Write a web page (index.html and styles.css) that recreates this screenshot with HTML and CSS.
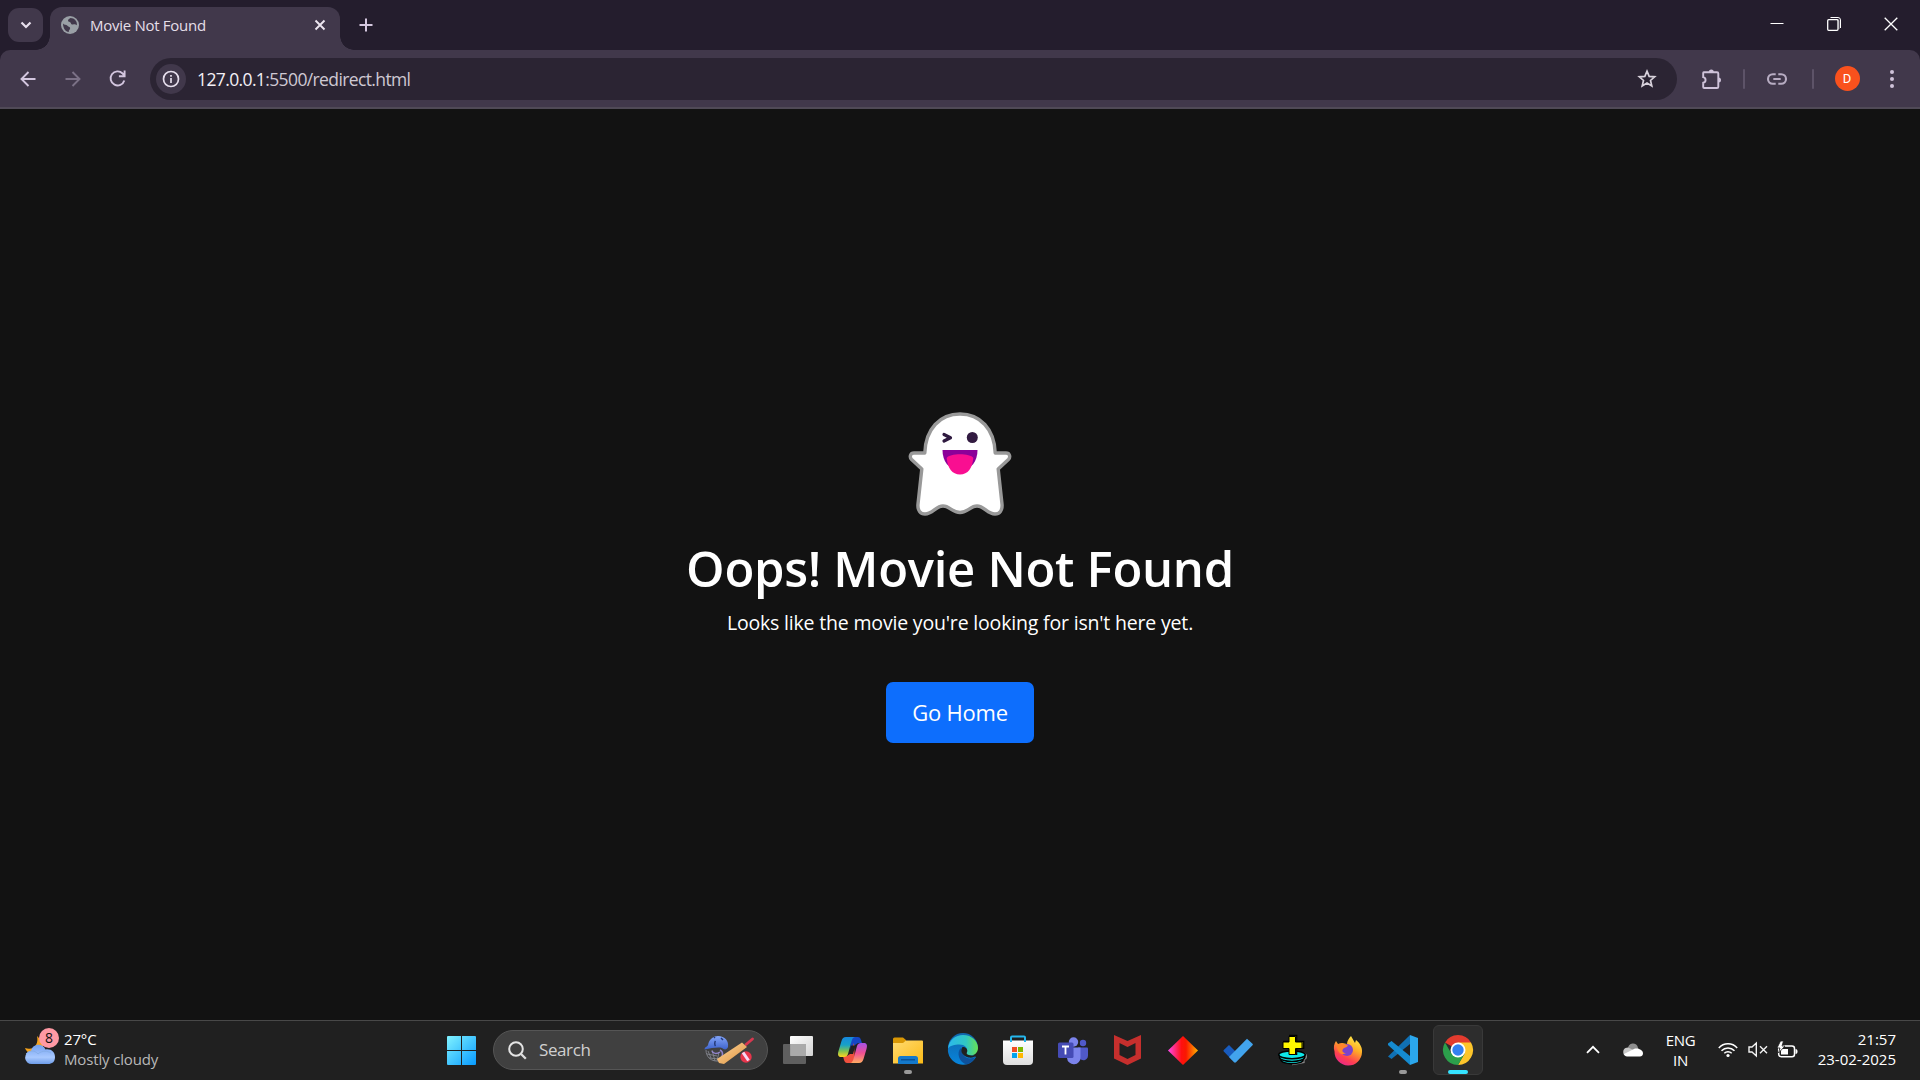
FILE: index.html
```html
<!DOCTYPE html>
<html lang="en">
<head>
<meta charset="utf-8">
<title>Movie Not Found</title>
<link rel="stylesheet" href="styles.css">
</head>
<body>
<div class="screen">
  <header class="tabstrip">
    <button class="tab-search" aria-label="Search tabs"><svg width="12" height="8" viewBox="0 0 12 8"><path d="M1.5 1.5L6 6l4.500-4.500" fill="none" stroke="#e8e0ee" stroke-width="2.200"/></svg></button>
    <div class="tab">
      <svg width="18" height="18" viewBox="0 0 18 18"><circle cx="9" cy="9" r="9" fill="#9aa0a6"/><path d="M2 7.500c1.500 1.800 3 1 4.500 2.200 1 1.500 3 .8 2.600 2.800-.2 1.500-1.600 1.500-1.300 3.600C4.500 15.500 2 12.500 2 7.500zM9.500 2c-.8 1-2.500 1-2.500 2.700 0 1.300 2.400.8 2.800 2.300.3 1.400 1.600 1.800 2.900 1.300 1-.4 2 0 3.200 1C16.500 5.500 13.500 2 9.500 2z" fill="#41384b"/></svg>
      <span class="tab-title">Movie Not Found</span>
      <svg width="12" height="12" viewBox="0 0 12 12"><path d="M1.500 1.500l9 9m0-9l-9 9" stroke="#ece6f0" stroke-width="1.900"/></svg>
    </div>
    <button class="new-tab" aria-label="New tab"><svg width="14" height="14" viewBox="0 0 14 14"><path d="M7 .5v13M.5 7h13" stroke="#d5c8e0" stroke-width="2"/></svg></button>
    <div class="window-controls">
      <span><svg width="14" height="14" viewBox="0 0 14 14"><path d="M.5 6.500h13" stroke="#fff"/></svg></span>
      <span><svg width="14" height="14" viewBox="0 0 14 14" fill="none"><path d="M3.500.500h7.500a2.500 2.500 0 0 1 2.500 2.500v8" stroke="#fff" stroke-width="1"/><path d="M2 2.500h8.500a1.500 1.500 0 0 1 1.500 1.500v8" stroke="#8d8793"/><rect x=".7" y="2.700" width="10.300" height="10.600" rx="1" stroke="#fff" stroke-width="1.300"/></svg></span>
      <span><svg width="14" height="14" viewBox="0 0 14 14"><path d="M.7.700l12.600 12.600M13.300.700L.7 13.300" stroke="#fff" stroke-width="1.300"/></svg></span>
    </div>
  </header>

  <nav class="toolbar">
    <span class="slot back"><svg width="16" height="16" viewBox="0 0 16 16"><path d="M15.500 8H2M8.500 1L1.500 8l7 7" fill="none" stroke="#d3c6df" stroke-width="1.900"/></svg></span>
    <span class="slot"><svg width="16" height="16" viewBox="0 0 16 16"><path d="M.5 8H14M7.500 1l7 7-7 7" fill="none" stroke="#7b7186" stroke-width="1.900"/></svg></span>
    <span class="slot"><svg width="17" height="17" viewBox="0 0 17 17"><path d="M15.300 10.400A7 7 0 1 1 13.600 3.500L15.300 5.400M15.600.6v5.700H9.900" fill="none" stroke="#d3c6df" stroke-width="1.900"/></svg></span>
    <div class="omnibox">
      <span class="site-info"><svg width="18" height="18" viewBox="0 0 18 18"><circle cx="9" cy="9" r="7.500" fill="none" stroke="#e6deec" stroke-width="1.700"/><path d="M9 8v5M9 5v1.800" stroke="#e6deec" stroke-width="1.700"/></svg></span>
      <span class="url"><b>127.0.0.1</b>:5500/redirect.html</span>
      <svg class="star" width="20" height="20" viewBox="0 0 20 20"><path d="M10 2.200l2.150 5.150 5.550.45-4.200 3.650 1.300 5.450L10 14l-4.800 2.900 1.300-5.450L2.300 7.800l5.550-.45z" fill="none" stroke="#d8d2dc" stroke-width="1.700"/></svg>
    </div>
    <span class="slot ext"><svg width="22" height="22" viewBox="0 0 22 22"><path d="M2.800 4.200H16a1.300 1.300 0 0 1 1.300 1.300v13.200a1.300 1.300 0 0 1-1.300 1.300H3.200a1 1 0 0 1-1-1v-4.200a2.900 2.900 0 0 0 0-5.700V4.900a.7.700 0 0 1 .6-.7z" fill="none" stroke="#cfc3da" stroke-width="1.900"/><path d="M7.800 4a2.500 2.500 0 0 1 5 0zM17.500 9.500a2.500 2.500 0 0 1 0 5z" fill="#cfc3da"/></svg></span>
    <i class="divider"></i>
    <span class="slot"><svg width="20" height="12" viewBox="0 0 20 12"><path d="M8.700 1.200H5.800a4.800 4.800 0 0 0 0 9.600h2.900M11.300 1.200h2.900a4.800 4.800 0 0 1 0 9.600h-2.900M6.300 6h7.400" fill="none" stroke="#b8adc3" stroke-width="2.100"/></svg></span>
    <i class="divider"></i>
    <span class="avatar">D</span>
    <span class="slot"><svg width="4" height="18" viewBox="0 0 4 18" fill="#cfc3da"><circle cx="2" cy="2" r="2"/><circle cx="2" cy="9" r="2"/><circle cx="2" cy="16" r="2"/></svg></span>
  </nav>

  <main class="page">
    <svg class="ghost" width="104" height="104" viewBox="0 0 104 104">
      <path d="M52 2C32 2 17.500 17 16.800 41H6C2.300 41 1.200 45 3.600 47.500L13.800 57 10 92C9.300 98.500 12.500 102 17 102c8 0 10.500-8 18-8 7 0 9 6.500 17 6.500s10-6.500 17-6.500C76.500 94 79 102 87 102c4.500 0 7.700-3.500 7-10L90.200 57l10.200-9.500C102.800 45 101.700 41 98 41H87.200C86.500 17 72 2 52 2z" fill="#fff" stroke="#999" stroke-width="3.400" stroke-linejoin="round"/>
      <path d="M36 22.500l6.500 3.200-6.500 3.300" fill="none" stroke="#2f1a40" stroke-width="3.200" stroke-linecap="round" stroke-linejoin="round"/>
      <circle cx="64.300" cy="25.500" r="5.500" fill="#321b41"/>
      <path d="M34.500 38h35c0 11-6 20-17.500 20s-17.500-9-17.500-20z" fill="#8c0099"/>
      <path d="M38.700 46c3-5 23.600-5 26.600 0C64.500 56 60 62.500 52 62.500S39.500 56 38.700 46z" fill="#f90e91"/>
    </svg>
    <h1>Oops! Movie Not Found</h1>
    <p>Looks like the movie you're looking for isn't here yet.</p>
    <a class="home">Go Home</a>
  </main>

  <footer class="taskbar">
    <div class="weather">
      <div class="weather-icon">
        <svg width="32" height="32" viewBox="0 0 32 32"><defs><linearGradient id="cl" x2="0" y2="1"><stop stop-color="#72a0ef"/><stop offset=".65" stop-color="#a9c9ff"/><stop offset="1" stop-color="#6d9ce8"/></linearGradient></defs><path d="M13 2c2 8-3 15-12 12 2 6 11 9 16 5l3-10z" fill="#f5a31d"/><path d="M8 30a6.500 6.500 0 0 1-.8-13C8 9.500 19 8.500 21.500 15.500 27 14.500 31 18 31 23s-3 7-7 7z" fill="url(#cl)"/><path d="M2 20c3-4 9-4 12 0 4-4 10-3 13-1" fill="none" stroke="#87afea"/></svg>
        <span class="badge">8</span>
      </div>
      <div class="weather-text"><span>27°C</span><span class="muted">Mostly cloudy</span></div>
    </div>

    <div class="apps">
      <span class="app start"><svg width="29" height="29" viewBox="0 0 29 29"><defs><linearGradient id="wn" x2="1" y2="1"><stop stop-color="#81f3ff"/><stop offset="1" stop-color="#079aff"/></linearGradient></defs><path d="M1 0h13v14H0V1a1 1 0 0 1 1-1zM15 0h13a1 1 0 0 1 1 1v13H15zM0 15h14v14H1a1 1 0 0 1-1-1zM15 15h14v13a1 1 0 0 1-1 1H15z" fill="url(#wn)"/></svg></span>
      <div class="search">
        <svg width="19" height="19" viewBox="0 0 19 19"><circle cx="8" cy="8" r="6.800" fill="none" stroke="#e4e4e4" stroke-width="2"/><path d="M12.800 12.800l5 5" stroke="#ddd" stroke-width="2.300"/></svg>
        <span class="search-label">Search</span>
        <svg width="50" height="30" viewBox="0 0 50 30"><defs><linearGradient id="bt" x2="1" y2="1"><stop stop-color="#ffd69b"/><stop offset="1" stop-color="#dd923e"/></linearGradient><linearGradient id="hm" x2="0" y2="1"><stop stop-color="#82a4f8"/><stop offset="1" stop-color="#3e63cb"/></linearGradient></defs><path d="M2 15c0 7 5 12 14 11M3 19l10 2M5 23l10 1M8 15l3 11M4 16l3 7M15 17l-2 9" stroke="#83868e" stroke-width=".9" fill="none"/><path d="M.5 14.500C.5 12 3 12 4 10 5 4 10 1 14 1c7 0 11 5 10 11-1 3-4 3-6 1-4-1-10 0-17.500 1.500z" fill="url(#hm)"/><path d="M11.500 6c-1 1-1 4 0 5M17 3l2 2M11 2l-1 1" stroke="#243978" stroke-width="1.500" fill="none"/><path d="M16 15c4 2 3 7-1 11M8 16c1 3 5 3 8 1" stroke="#9184cc" stroke-width="1.500" fill="none"/><path d="M42 9.500L48.500 4" stroke="#d83850" stroke-width="2.800" stroke-linecap="round"/><path d="M38 7.500l5 4.500L20 29l-5-1-2-4z" fill="url(#bt)"/><circle cx="42" cy="22" r="5.700" fill="#e7354b"/><path d="M39 17.500l5.500 8" stroke="#f6d9f5" stroke-width="3"/></svg>
      </div>
      <span class="app"><svg width="30" height="28" viewBox="0 0 30 28"><defs><linearGradient id="tv" x2="1" y2="1"><stop stop-color="#fff"/><stop offset="1" stop-color="#d3d3d3"/></linearGradient></defs><rect x="7" y="0" width="23" height="20" rx="1" fill="url(#tv)"/><rect y="8" width="23" height="20" rx="1" fill="#777" fill-opacity=".72"/><path d="M7.500 8H22a1 1 0 0 1 1 1v11H7.500z" fill="#aaa"/></svg></span>
      <span class="app"><svg width="29" height="26" viewBox="0 0 29 26"><defs><linearGradient id="c1" x2="0" y2="1"><stop stop-color="#1687de"/><stop offset=".4" stop-color="#17a1c7"/><stop offset=".7" stop-color="#7cc253"/><stop offset="1" stop-color="#ffd51f"/></linearGradient><linearGradient id="c2" x2="0" y2="1"><stop stop-color="#a552e7"/><stop offset=".5" stop-color="#ef4f93"/><stop offset="1" stop-color="#ffac62"/></linearGradient></defs><path d="M12 0h8c2.500 0 3 3 4 6h-4l-3 2-4 11z" fill="#1546c5"/><path d="M17 26H9c-2.500 0-3-3-4-7h4l3-2 4-11z" fill="#f0503e"/><path d="M8 0h9c-2 0-3 2-4 6l-3 11c-.6 2-2 3-4 3H3c-3 0-3.500-2.500-2.500-6L3.500 4C4.300 1.500 5.500 0 8 0z" fill="url(#c1)"/><path d="M21 26h-9c2 0 3-2 4-6l3-11c.6-2 2-3 4-3h3c3 0 3.500 2.500 2.500 6l-3 10c-.8 2.500-2 4-4.500 4z" fill="url(#c2)"/><path d="M13.300 8.500h4.200l-2.500 8.500h-4.200z" fill="#202020"/></svg></span>
      <span class="app running"><svg width="30" height="27" viewBox="0 0 30 27"><defs><linearGradient id="fo" x2="1" y2="1"><stop stop-color="#ffda70"/><stop offset="1" stop-color="#fcbb16"/></linearGradient></defs><path d="M0 2a1.500 1.500 0 0 1 1.500-1.500H10L13 3v5H0z" fill="#d99704"/><path d="M0 6h10l3-2.500h16a1 1 0 0 1 1 1V26.500H0z" fill="url(#fo)"/><path d="M5 27v-5.500A2.500 2.500 0 0 1 7.500 19h15a2.500 2.500 0 0 1 2.500 2.500V27z" fill="#1479cb"/><path d="M8 22.800h14" stroke="#064a8c" stroke-width="1.200"/></svg></span>
      <span class="app"><svg width="30" height="30" viewBox="0 0 30 30"><defs><linearGradient id="e1" x2="1"><stop stop-color="#2bb7ec"/><stop offset=".6" stop-color="#31c7c3"/><stop offset="1" stop-color="#68e252"/></linearGradient><linearGradient id="e2" x2="0" y2="1"><stop stop-color="#1165ab"/><stop offset="1" stop-color="#0785dc"/></linearGradient></defs><path d="M0 13a15 15 0 0 0 28 9l-6-4 8-5A15 15 0 0 0 0 13z" fill="url(#e2)"/><path d="M0 13.500C1 5 7.500 0 15 0c9 0 15 6.500 15 13 0 5-4 7.500-7.500 7.500-4 0-5.500-1.500-4-3.500 2-4-2-7.500-7-7.500-5 0-9.500 1-11.500 4z" fill="url(#e1)"/><path d="M13 13c-5 4-2 15 6 16.500 3-1 6.500-3.500 8.500-7.500-7 3.500-13.500.5-14.500-9z" fill="#0e519b"/><path d="M14.500 12c-3 4 0 9 6 10.500 4 .5 6-.5 7.500-1.500l2-3c-3 3-7 3-10 1.800-2-1-1.200-2.300-.7-3.600.3-2-1.500-4.200-4.800-4.200z" fill="#202020"/></svg></span>
      <span class="app"><svg width="30" height="30" viewBox="0 0 30 30"><defs><linearGradient id="st" x2="0" y2="1"><stop stop-color="#fff"/><stop offset="1" stop-color="#dedede"/></linearGradient></defs><path d="M0 5.500h30V26a4 4 0 0 1-4 4H4a4 4 0 0 1-4-4z" fill="url(#st)"/><path d="M8 7V2.500A1 1 0 0 1 9 1.500h12a1 1 0 0 1 1 1V7" fill="none" stroke="#25b7ed" stroke-width="2"/><path d="M9 12h5v5H9z" fill="#f04e23"/><path d="M15 12h5v5h-5z" fill="#7eb900"/><path d="M9 18h5v5H9z" fill="#00a3ee"/><path d="M15 18h5v5h-5z" fill="#ffb700"/></svg></span>
      <span class="app"><svg width="30" height="27" viewBox="0 0 30 27"><circle cx="15.500" cy="5" r="4.700" fill="#7b83eb"/><circle cx="25" cy="6" r="3.200" fill="#5059c9"/><path d="M20 10.500h9a1 1 0 0 1 1 1V18c0 6-6 6-8 4z" fill="#5059c9"/><path d="M9 10.500h13.500V20a6.500 6.500 0 0 1-13.500 1z" fill="#7b83eb"/><rect y="5.500" width="15.500" height="15.500" rx="1.500" fill="#454bb5"/><path d="M4 9.500h7M7.500 9.500V17.500" stroke="#fff" stroke-width="1.800"/></svg></span>
      <span class="app"><svg width="27" height="30" viewBox="0 0 27 30"><path d="M0 0l13.500 6L27 0v23.500L13.500 30 0 23.500zM5.500 8v12l8 4 8-4V8l-8 4z" fill="#c62f2d"/></svg></span>
      <span class="app"><svg width="30" height="29" viewBox="0 0 30 29"><defs><linearGradient id="di" x2="1"><stop stop-color="#ff49ee"/><stop offset=".45" stop-color="#ff1010"/><stop offset=".6" stop-color="#fa1800"/><stop offset="1" stop-color="#ffb400"/></linearGradient></defs><path d="M15 0l15 14.500L15 29 0 14.500z" fill="url(#di)"/></svg></span>
      <span class="app"><svg width="30" height="25" viewBox="0 0 30 25"><path d="M6 7l8 8-5 7L.8 13.500a1 1 0 0 1 0-1.500z" fill="#185bbd"/><path d="M24 .7l5.500 5a1 1 0 0 1 0 1.500L13 24.300a1.500 1.500 0 0 1-2 0L6 19z" fill="#42a4ed"/></svg></span>
      <span class="app"><svg width="30" height="30" viewBox="0 0 30 30"><path d="M24 17.500c6 1.500 5 6 2 7v3l-12 2" fill="none" stroke="#888" stroke-width="1.300"/><g fill="#0ee7e9" stroke="#000" stroke-width="1.500"><ellipse cx="14" cy="25" rx="11" ry="3.700"/><ellipse cx="14" cy="22.500" rx="12.500" ry="3.900"/><ellipse cx="14" cy="19.800" rx="13.300" ry="3.900"/></g><path d="M11 1h7v6h7v7h-7v6h-7v-6H5V7h6z" transform="translate(.7 -.7)" fill="#8c8600" stroke="#000" stroke-width="1.200"/><path d="M11 1.500h6.500V7H24v6.500h-6.500v6H11v-6H5V7h6z" fill="#fff700" stroke="#000" stroke-width="1"/></svg></span>
      <span class="app"><svg width="29" height="29" viewBox="0 0 29 29"><defs><linearGradient id="f1" x1=".8" x2=".3" y2="1"><stop stop-color="#fff04c"/><stop offset=".4" stop-color="#ffac26"/><stop offset=".75" stop-color="#ff4050"/><stop offset="1" stop-color="#e9268b"/></linearGradient></defs><path d="M3 5l2 3 4-1 5 1c0-3 2-6 4-8l4 7 1-3c4 3 6.500 8 6 12a13.700 13.700 0 0 1-27.500-.5C.2 11 1 8 3 5z" fill="url(#f1)"/><circle cx="14" cy="14" r="6" fill="#7b43cc"/><path d="M4 9c4-3 8-1 11 .5-1 2-4 2-5 3.500-1.500 2 0 4 3 4-4 3-9 0-9-8z" fill="#ff842b"/></svg></span>
      <span class="app running"><svg width="30" height="30" viewBox="0 0 30 30"><path d="M0 21.500L22 0v9L3.500 24z" fill="#1070b3"/><path d="M0 8.500L3.500 6 22 21v9L0 10z" fill="#158bd0"/><path d="M22 0l8 3v24l-8 3z" fill="#2ba7ed"/></svg></span>
      <span class="app active"><svg width="30" height="30" viewBox="0 0 30 30"><path d="M15 15L2 7.500A15 15 0 0 1 28 7.500z" fill="#e33b2e"/><path d="M15 7.500h13A15 15 0 0 1 15 30l6.500-11.250z" fill="#fdc52b"/><path d="M2 7.500A15 15 0 0 0 15 30l6.500-11.250h-13z" fill="#2c9f4b"/><circle cx="15" cy="15" r="7.500" fill="#fff"/><circle cx="15" cy="15" r="5.700" fill="#3380f2"/></svg></span>
    </div>

    <div class="tray">
      <svg class="chev" width="14" height="9" viewBox="0 0 14 9"><path d="M1 7.800l6-6 6 6" fill="none" stroke="#fff" stroke-width="1.800"/></svg>
      <svg class="cloud" width="20" height="14" viewBox="0 0 20 14"><path d="M5 6a5 5 0 0 1 10-1l2 4H4z" fill="#8d8d8d"/><path d="M1 12C-1 8 1 4.500 5 4.500L17 10z" fill="#c8c8c8"/><path d="M1 11l11-5.500c3-.5 8 1 8 5 0 2-1.500 3-3 3H4c-1.500 0-3-1-3-2.500z" fill="#fff"/></svg>
      <div class="lang"><span>ENG</span><span>IN</span></div>
      <svg class="wifi" width="20" height="16" viewBox="0 0 20 16" fill="none" stroke="#fff" stroke-width="1.500"><path d="M.8 6a12.300 12.300 0 0 1 18.400 0M3.500 8.700a9 9 0 0 1 13 0M6.300 11.300a5.300 5.300 0 0 1 7.400 0"/><circle cx="10" cy="13.500" r="1.600" fill="#fff" stroke="none"/></svg>
      <svg class="mute" width="20" height="15" viewBox="0 0 20 15" fill="none" stroke="#f2f2f2" stroke-width="1.400"><path d="M1 5h3l4.300-4v13L4 10H1zM12 4.200l7 7m0-7l-7 7"/></svg>
      <svg class="battery" width="21" height="18" viewBox="0 0 21 18"><rect x="1.700" y="5" width="15.800" height="10.800" rx="2.500" fill="none" stroke="#fff" stroke-width="1.500"/><path d="M4 8h7v5.500H4z" fill="#fff"/><path d="M18.500 8v5c1.500 0 2-1 2-2.500S20 8 18.500 8z" fill="#fff"/><path d="M3.500 0L0 7h3l-1.500 5L8 5H5l1.500-5z" fill="#fff" stroke="#202020" stroke-width=".8"/></svg>
      <div class="clock"><span>21:57</span><span>23-02-2025</span></div>
    </div>
  </footer>
</div>
</body>
</html>
```
FILE: styles.css
```css
* { box-sizing: border-box; }
body { margin: 0; font-family: "Open Sans", "Noto Sans", sans-serif; color: #fff; overflow: hidden; }
svg { display: block; flex: none; overflow: visible; }
button { border: 0; padding: 0; background: none; }
.screen { width: 1920px; height: 1080px; display: grid; grid-template-rows: 50px 59px 911px 60px; background: #241d2d; }

.tabstrip { display: flex; align-items: flex-end; padding-left: 8px; }
.tab-search { width: 35px; height: 34px; margin-bottom: 8px; border-radius: 11px; background: #41384b; display: grid; place-items: center; }
.tab { position: relative; width: 290px; height: 43px; margin-left: 7px; padding: 0 14px 7px 11px; border-radius: 12px 12px 0 0; background: #41384b; display: flex; align-items: center; }
.tab::before, .tab::after { content: ""; position: absolute; bottom: 0; width: 14px; height: 14px; }
.tab::before { left: -14px; background: radial-gradient(circle at 0 0, transparent 13.500px, #41384b 14px); }
.tab::after { right: -14px; background: radial-gradient(circle at 100% 0, transparent 13.500px, #41384b 14px); }
.tab-title { flex: 1; padding-left: 11px; font-size: 15px; line-height: 20px; letter-spacing: -.28px; color: #e5dfe8; white-space: nowrap; }
.new-tab { width: 52px; height: 50px; display: grid; place-items: center; }
.window-controls { margin-left: auto; height: 50px; display: grid; grid-template-columns: 57px 57px 57px; padding-bottom: 2px; margin-right: 1px; }
.window-controls span { display: grid; place-items: center; }

.toolbar { height: 59px; padding: 0 4px 0 5px; border-bottom: 2px solid #504a57; border-radius: 10px 10px 0 0; background: #41384b; display: grid; align-items: center; grid-template-columns: 45px 45px 55px 1527px 12px 44px 21px 46px 26px 42px 48px; }
.slot { width: 45px; display: grid; place-items: center; }
.toolbar > :nth-child(n+5) { justify-self: center; }
.ext { grid-column: 6; padding-left: 2px; }
.omnibox { height: 42px; margin-top: 1px; padding: 0 20px 0 6px; border-radius: 21px; background: #2b2433; display: flex; align-items: center; }
.site-info { width: 30px; height: 30px; border-radius: 50%; background: #41384b; display: grid; place-items: center; }
.url { flex: 1; padding-left: 11px; font-size: 17.500px; letter-spacing: -.62px; color: #cfc9d3; white-space: nowrap; }
.url b { font-weight: 400; color: #f4f0f6; }
.divider { width: 2px; height: 20px; border-radius: 1px; background: #5d5368; }
.avatar { width: 25px; height: 25px; border-radius: 50%; background: #f9511d; font: 13px/25px Roboto, sans-serif; text-align: center; }

.page { background: #121212; display: flex; flex-direction: column; align-items: center; padding-top: 303px; }
.page h1 { margin: 16px 0 0; font-size: 49px; line-height: 72px; font-weight: 600; letter-spacing: -.3px; white-space: nowrap; }
.page p { margin: 4px 0 0; font-size: 19.500px; line-height: 30px; letter-spacing: -.18px; white-space: nowrap; }
.home { width: 148px; height: 61px; margin-top: 44px; border-radius: 7px; background: #0d6efd; font-size: 22px; line-height: 61px; letter-spacing: -.2px; text-align: center; white-space: nowrap; }

.taskbar { border-top: 1px solid #484848; background: #202020; display: grid; grid-template-columns: 433px 1053px 434px; align-items: center; font-size: 15px; line-height: 20px; }
.weather { display: flex; padding: 0 0 3px 24px; align-items: center; }
.weather-icon { position: relative; padding-top: 2px; }
.badge { position: absolute; left: 15px; top: -4px; width: 20px; height: 20px; border-radius: 50%; background: #ff99a4; color: #111; font-size: 14px; line-height: 20px; text-align: center; }
.weather-text { display: flex; flex-direction: column; padding-left: 8px; letter-spacing: -.15px; white-space: nowrap; }
.muted { color: #b8b8b8; }
.apps { display: flex; align-items: center; height: 59px; padding-bottom: 1px; }
.app { position: relative; width: 55px; height: 50px; flex: none; display: grid; place-items: center; }
.start { padding-left: 2px; }
.search { width: 275px; height: 40px; margin: 0 2px 0 5px; padding: 0 13px 0 14px; border: 1px solid #555; border-radius: 20px; background: #404040; display: flex; align-items: center; }
.search-label { flex: 1; padding-left: 12px; font-size: 17px; letter-spacing: -.4px; color: #d0d0d0; }
.running::after { content: ""; position: absolute; left: 23.500px; bottom: 1px; width: 8px; height: 4px; border-radius: 2px; background: #999; }
.active::before { content: ""; position: absolute; inset: 0 2.500px; border: 1px solid #393939; border-radius: 6px; background: #2d2d2d; }
.active svg { position: relative; }
.active::after { content: ""; position: absolute; left: 17.500px; bottom: 1px; width: 20px; height: 4px; border-radius: 2px; background: #35e3ff; }
.tray { display: flex; align-items: center; padding: 0 0 2px 100px; white-space: nowrap; }
.cloud { margin-left: 23px; }
.lang { width: 31px; margin-left: 22px; display: flex; flex-direction: column; align-items: center; letter-spacing: -.3px; }
.wifi { margin-left: 22px; }
.mute { margin-left: 10px; }
.battery { margin-left: 9px; }
.clock { flex: 1; padding: 0 24px 2px 0; display: flex; flex-direction: column; align-items: flex-end; letter-spacing: 0; }
```
